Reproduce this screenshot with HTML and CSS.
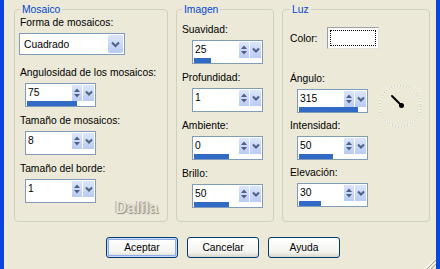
FILE: index.html
```html
<!DOCTYPE html>
<html lang="es">
<head>
    <meta charset="UTF-8">
    <meta name="viewport" content="width=device-width, initial-scale=1.0">

    <title>Mosaico</title>

    <link rel="stylesheet" href="styles.css">

</head>

<body>

    <div class="window">

        <div class="groups">

            <fieldset class="group group-mosaico">
                <legend>Mosaico</legend>
                <div class="group-body">
                    <div class="field field-first">
                        <label>Forma de mosaicos:</label>
                        <div class="combo">
                            <span class="combo-text">Cuadrado</span>
                            <span class="combo-drop">
                                <svg width="15" height="18" viewBox="0 0 15 18"><polyline points="4,7.5 7.5,11 11,7.5" fill="none" stroke="#4d6185" stroke-width="2"/></svg>
                            </span>
                        </div>
                    </div>
                    <div class="field">
                        <label>Angulosidad de los mosaicos:</label>
                        <div class="spin">
                            <div class="spin-row">
                                <span class="spin-value">75</span>
                                <span class="spin-arrows"><svg width="10" height="16" viewBox="0 0 10 16"><path d="M2 7 L5 3.5 L8 7 Z M2 9 L5 12.5 L8 9 Z" fill="#4d6185"/></svg></span>
                                <span class="spin-drop"><svg width="10" height="16" viewBox="0 0 10 16"><polyline points="2,6.5 5,9.5 8,6.5" fill="none" stroke="#4d6185" stroke-width="2"/></svg></span>
                            </div>
                            <div class="spin-track"><div class="spin-fill" style="width: 75%"></div></div>
                        </div>
                    </div>
                    <div class="field">
                        <label>Tamaño de mosaicos:</label>
                        <div class="spin">
                            <div class="spin-row">
                                <span class="spin-value">8</span>
                                <span class="spin-arrows"><svg width="10" height="16" viewBox="0 0 10 16"><path d="M2 7 L5 3.5 L8 7 Z M2 9 L5 12.5 L8 9 Z" fill="#4d6185"/></svg></span>
                                <span class="spin-drop"><svg width="10" height="16" viewBox="0 0 10 16"><polyline points="2,6.5 5,9.5 8,6.5" fill="none" stroke="#4d6185" stroke-width="2"/></svg></span>
                            </div>
                            <div class="spin-track"><div class="spin-fill" style="width: 0%"></div></div>
                        </div>
                    </div>
                    <div class="field">
                        <label>Tamaño del borde:</label>
                        <div class="spin">
                            <div class="spin-row">
                                <span class="spin-value">1</span>
                                <span class="spin-arrows"><svg width="10" height="16" viewBox="0 0 10 16"><path d="M2 7 L5 3.5 L8 7 Z M2 9 L5 12.5 L8 9 Z" fill="#4d6185"/></svg></span>
                                <span class="spin-drop"><svg width="10" height="16" viewBox="0 0 10 16"><polyline points="2,6.5 5,9.5 8,6.5" fill="none" stroke="#4d6185" stroke-width="2"/></svg></span>
                            </div>
                            <div class="spin-track"><div class="spin-fill" style="width: 0%"></div></div>
                        </div>
                    </div>
                    <div class="watermark">Dalila</div>
                </div>
            </fieldset>

            <fieldset class="group group-imagen">
                <legend>Imagen</legend>
                <div class="group-body">
                    <div class="field">
                        <label>Suavidad:</label>
                        <div class="spin">
                            <div class="spin-row">
                                <span class="spin-value">25</span>
                                <span class="spin-arrows"><svg width="10" height="16" viewBox="0 0 10 16"><path d="M2 7 L5 3.5 L8 7 Z M2 9 L5 12.5 L8 9 Z" fill="#4d6185"/></svg></span>
                                <span class="spin-drop"><svg width="10" height="16" viewBox="0 0 10 16"><polyline points="2,6.5 5,9.5 8,6.5" fill="none" stroke="#4d6185" stroke-width="2"/></svg></span>
                            </div>
                            <div class="spin-track"><div class="spin-fill" style="width: 26%"></div></div>
                        </div>
                    </div>
                    <div class="field">
                        <label>Profundidad:</label>
                        <div class="spin">
                            <div class="spin-row">
                                <span class="spin-value">1</span>
                                <span class="spin-arrows"><svg width="10" height="16" viewBox="0 0 10 16"><path d="M2 7 L5 3.5 L8 7 Z M2 9 L5 12.5 L8 9 Z" fill="#4d6185"/></svg></span>
                                <span class="spin-drop"><svg width="10" height="16" viewBox="0 0 10 16"><polyline points="2,6.5 5,9.5 8,6.5" fill="none" stroke="#4d6185" stroke-width="2"/></svg></span>
                            </div>
                            <div class="spin-track"><div class="spin-fill" style="width: 0%"></div></div>
                        </div>
                    </div>
                    <div class="field">
                        <label>Ambiente:</label>
                        <div class="spin">
                            <div class="spin-row">
                                <span class="spin-value">0</span>
                                <span class="spin-arrows"><svg width="10" height="16" viewBox="0 0 10 16"><path d="M2 7 L5 3.5 L8 7 Z M2 9 L5 12.5 L8 9 Z" fill="#4d6185"/></svg></span>
                                <span class="spin-drop"><svg width="10" height="16" viewBox="0 0 10 16"><polyline points="2,6.5 5,9.5 8,6.5" fill="none" stroke="#4d6185" stroke-width="2"/></svg></span>
                            </div>
                            <div class="spin-track"><div class="spin-fill" style="width: 52%"></div></div>
                        </div>
                    </div>
                    <div class="field">
                        <label>Brillo:</label>
                        <div class="spin">
                            <div class="spin-row">
                                <span class="spin-value">50</span>
                                <span class="spin-arrows"><svg width="10" height="16" viewBox="0 0 10 16"><path d="M2 7 L5 3.5 L8 7 Z M2 9 L5 12.5 L8 9 Z" fill="#4d6185"/></svg></span>
                                <span class="spin-drop"><svg width="10" height="16" viewBox="0 0 10 16"><polyline points="2,6.5 5,9.5 8,6.5" fill="none" stroke="#4d6185" stroke-width="2"/></svg></span>
                            </div>
                            <div class="spin-track"><div class="spin-fill" style="width: 52%"></div></div>
                        </div>
                    </div>
                </div>
            </fieldset>

            <fieldset class="group group-luz">
                <legend>Luz</legend>
                <div class="group-body">
                    <div class="color-row">
                        <label>Color:</label>
                        <div class="swatch"><div class="swatch-focus"></div></div>
                    </div>
                    <div class="light-row">
                        <div class="light-fields">
                            <div class="field">
                                <label>Ángulo:</label>
                                <div class="spin">
                                    <div class="spin-row">
                                        <span class="spin-value">315</span>
                                        <span class="spin-arrows"><svg width="10" height="16" viewBox="0 0 10 16"><path d="M2 7 L5 3.5 L8 7 Z M2 9 L5 12.5 L8 9 Z" fill="#4d6185"/></svg></span>
                                        <span class="spin-drop"><svg width="10" height="16" viewBox="0 0 10 16"><polyline points="2,6.5 5,9.5 8,6.5" fill="none" stroke="#4d6185" stroke-width="2"/></svg></span>
                                    </div>
                                    <div class="spin-track"><div class="spin-fill" style="width: 87.5%"></div></div>
                                </div>
                            </div>
                            <div class="field">
                                <label>Intensidad:</label>
                                <div class="spin">
                                    <div class="spin-row">
                                        <span class="spin-value">50</span>
                                        <span class="spin-arrows"><svg width="10" height="16" viewBox="0 0 10 16"><path d="M2 7 L5 3.5 L8 7 Z M2 9 L5 12.5 L8 9 Z" fill="#4d6185"/></svg></span>
                                        <span class="spin-drop"><svg width="10" height="16" viewBox="0 0 10 16"><polyline points="2,6.5 5,9.5 8,6.5" fill="none" stroke="#4d6185" stroke-width="2"/></svg></span>
                                    </div>
                                    <div class="spin-track"><div class="spin-fill" style="width: 50%"></div></div>
                                </div>
                            </div>
                            <div class="field">
                                <label>Elevación:</label>
                                <div class="spin">
                                    <div class="spin-row">
                                        <span class="spin-value">30</span>
                                        <span class="spin-arrows"><svg width="10" height="16" viewBox="0 0 10 16"><path d="M2 7 L5 3.5 L8 7 Z M2 9 L5 12.5 L8 9 Z" fill="#4d6185"/></svg></span>
                                        <span class="spin-drop"><svg width="10" height="16" viewBox="0 0 10 16"><polyline points="2,6.5 5,9.5 8,6.5" fill="none" stroke="#4d6185" stroke-width="2"/></svg></span>
                                    </div>
                                    <div class="spin-track"><div class="spin-fill" style="width: 33%"></div></div>
                                </div>
                            </div>
                        </div>
                        <!-- angle dial -->
                        <svg class="dial" width="44" height="44" viewBox="0 0 44 44">
                            <circle cx="22" cy="22" r="20.5" fill="none" stroke="#ffffff" stroke-width="1"/>
                            <circle cx="22" cy="22" r="20.5" fill="none" stroke="#a9a596" stroke-width="1" stroke-dasharray="1 2"/>
                            <line x1="23" y1="21" x2="14" y2="12" stroke="#000000" stroke-width="2" stroke-linecap="round"/>
                            <circle cx="23.5" cy="21.5" r="2.5" fill="#000000"/>
                        </svg>
                    </div>
                </div>
            </fieldset>

        </div>

        <div class="actions">
            <button class="btn btn-default">Aceptar</button>
            <button class="btn">Cancelar</button>
            <button class="btn">Ayuda</button>
        </div>

        <!-- resize grip -->
        <svg class="grip" width="12" height="12" viewBox="0 0 12 12">
            <path d="M11 2 L2 11 M11 6 L6 11 M11 10 L10 11" stroke="#ffffff" stroke-width="1"/>
            <path d="M12 3 L3 12 M12 7 L7 12" stroke="#a9a597" stroke-width="1"/>
        </svg>

    </div>

</body>

</html>
```

FILE: styles.css
```css
body {
    margin: 0;
    font-family: "Liberation Sans", Arial, sans-serif;
    font-size: 10.3px;
    line-height: 13px;
    color: #000000;
}

.window {
    position: relative;
    box-sizing: border-box;
    width: 440px;
    height: 269px;
    background-color: #ece9d8;
    border-left: 4px solid #0b45dd;
    border-right: 4px solid #0b45dd;
}

.groups {
    display: flex;
    gap: 8px;
    height: 219px;
    padding: 3px 0 0 10px;
}

.group {
    box-sizing: border-box;
    margin: 0;
    padding: 0 5px;
    min-width: 0;
    border: 1px solid #d0d0bf;
    border-radius: 4px;
}

.group legend {
    padding: 0 2px;
    color: #0046d5;
}

.group-body {
    display: flex;
    flex-direction: column;
}

.group-mosaico {
    width: 154px;
}

.group-mosaico .group-body {
    gap: 7px;
}

.group-imagen {
    width: 98px;
    padding-top: 7px;
}

.group-imagen .group-body {
    gap: 7px;
}

.group-luz {
    width: 148px;
    padding: 11px 5px 0 7px;
}

.field {
    display: flex;
    flex-direction: column;
    align-items: flex-start;
    gap: 4px;
}

.field-first {
    margin-bottom: 4px;
}

.group-mosaico .spin {
    margin-left: 5px;
}

.group-imagen .spin {
    margin-left: 10px;
}

.group-luz .spin {
    margin-left: 7px;
}

/* combo box */
.combo {
    box-sizing: border-box;
    display: flex;
    align-items: center;
    width: 106px;
    height: 22px;
    margin-left: -1px;
    padding: 1px;
    border: 1px solid #7f9db9;
    background-color: #ffffff;
}

.combo-text {
    flex: 1;
    padding-left: 3px;
}

.combo-drop {
    display: flex;
    width: 15px;
    height: 18px;
    border-radius: 2px;
    background: linear-gradient(#dce6fd, #b8caf4);
}

/* spin edit with slider bar */
.spin {
    box-sizing: border-box;
    width: 71px;
    height: 24px;
    padding: 1px 1px 0 1px;
    border: 1px solid #7f9db9;
    background-color: #ffffff;
}

.spin-row {
    display: flex;
    height: 16px;
}

.spin-value {
    flex: 1;
    padding-left: 1px;
    line-height: 16px;
}

.spin-arrows,
.spin-drop {
    display: flex;
    justify-content: center;
    width: 10px;
    background: linear-gradient(#dbe5fc, #b9cbf4);
}

.spin-drop {
    width: 11px;
    margin-left: 1px;
}

.spin-track {
    height: 5px;
}

.spin-fill {
    height: 100%;
    background-color: #316ac5;
}

.watermark {
    align-self: flex-end;
    margin-top: -10px;
    padding-right: 4px;
    font-size: 16px;
    font-weight: bold;
    line-height: 16px;
    color: #e6e3d9;
    text-shadow: 1px 1px 1px #8e8c84, -1px 0 0 #b3b1a7;
}

/* luz group */
.color-row {
    display: flex;
    align-items: center;
    gap: 10px;
}

.swatch {
    box-sizing: border-box;
    width: 52px;
    height: 22px;
    padding: 2px;
    border: 1px solid;
    border-color: #a0a0a0 #e4e2da #e4e2da #a0a0a0;
    background-color: #ffffff;
}

.swatch-focus {
    box-sizing: border-box;
    height: 100%;
    border: 1px dotted #000000;
}

.light-row {
    display: flex;
    align-items: flex-start;
    margin-top: 23px;
}

.light-fields {
    display: flex;
    flex-direction: column;
    gap: 6px;
}

.dial {
    margin: 12px 0 0 10px;
}

/* buttons */
.actions {
    display: flex;
    gap: 9px;
    padding: 15px 0 0 102px;
}

.btn {
    box-sizing: border-box;
    width: 72px;
    height: 21px;
    padding: 0;
    border: 1px solid #003c74;
    border-radius: 3px;
    background: linear-gradient(#ffffff, #f3f3ef 75%, #d9d4c8);
    font: inherit;
    color: #000000;
}

.btn-default {
    box-shadow: inset 0 0 0 1px #c9dafb, inset 0 0 0 2px #8eace9;
}

.grip {
    position: absolute;
    right: 0;
    bottom: 0;
}
```
